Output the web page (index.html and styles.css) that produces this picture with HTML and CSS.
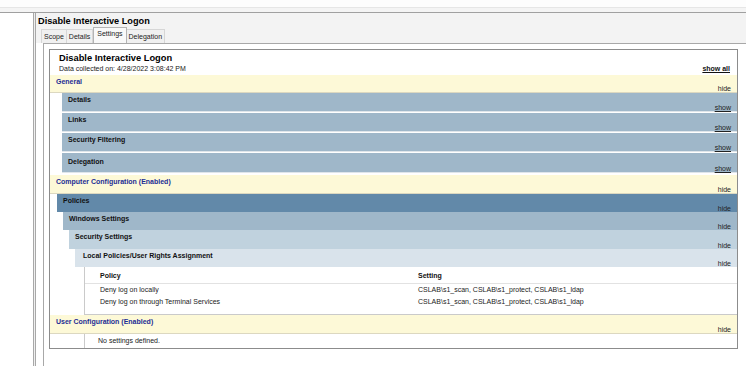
FILE: index.html
```html
<!DOCTYPE html>
<html lang="en">
<head>
  <meta charset="UTF-8">
  <title>Disable Interactive Logon</title>
  <link rel="stylesheet" href="styles.css">
</head>
<body>
  <div class="topbar"></div>
  <div class="main">
    <div class="tree"></div>
    <div class="splitter"></div>
    <div class="pane">
      <div class="pane-head">
        <h1>Disable Interactive Logon</h1>
        <div class="tabs">
          <span class="tab">Scope</span>
          <span class="tab">Details</span>
          <span class="tab active">Settings</span>
          <span class="tab">Delegation</span>
        </div>
      </div>

      <div class="page">
        <div class="report">
          <div class="report-head">
            <div class="report-title">Disable Interactive Logon</div>
            <div class="report-meta">
              <span>Data collected on: 4/28/2022 3:08:42 PM</span>
              <a class="show-all">show all</a>
            </div>
          </div>

          <div class="bar he0 first"><span class="name">General</span><a class="toggle">hide</a></div>
          <div class="block general">
            <div class="bar he1 gap"><span class="name">Details</span><a class="toggle show">show</a></div>
            <div class="bar he1 gap"><span class="name">Links</span><a class="toggle show">show</a></div>
            <div class="bar he1 gap"><span class="name">Security Filtering</span><a class="toggle show">show</a></div>
            <div class="bar he1 gap last"><span class="name">Delegation</span><a class="toggle show">show</a></div>
          </div>

          <div class="bar he0"><span class="name">Computer Configuration (Enabled)</span><a class="toggle">hide</a></div>
          <div class="block level0">
            <div class="bar he1h"><span class="name">Policies</span><a class="toggle">hide</a></div>
            <div class="block level1">
              <div class="bar he1"><span class="name">Windows Settings</span><a class="toggle">hide</a></div>
              <div class="block level1">
                <div class="bar he2"><span class="name">Security Settings</span><a class="toggle">hide</a></div>
                <div class="block level1">
                  <div class="bar he3"><span class="name">Local Policies/User Rights Assignment</span><a class="toggle">hide</a></div>
                  <div class="settings">
                    <table>
                      <tr><th>Policy</th><th>Setting</th></tr>
                      <tr><td>Deny log on locally</td><td>CSLAB\s1_scan, CSLAB\s1_protect, CSLAB\s1_ldap</td></tr>
                      <tr><td>Deny log on through Terminal Services</td><td>CSLAB\s1_scan, CSLAB\s1_protect, CSLAB\s1_ldap</td></tr>
                    </table>
                  </div>
                </div>
              </div>
            </div>
          </div>

          <div class="bar he0"><span class="name">User Configuration (Enabled)</span><a class="toggle">hide</a></div>
          <div class="none">No settings defined.</div>
        </div>
      </div>
    </div>
  </div>
</body>
</html>
```

FILE: styles.css
```css
* { box-sizing: border-box; }

body {
  margin: 0;
  width: 746px;
  height: 366px;
  overflow: hidden;
  background: #fff;
  font-family: "Liberation Sans", Arial, sans-serif;
  color: #000;
}

.topbar {
  height: 13px;
  background: linear-gradient(#fdfdfd 0 7px, #e6e6e6 7px 8px, #f4f4f4 8px);
  border-bottom: 1px solid #a0a0a0;
}

.main { display: flex; height: 353px; }
.tree { width: 33px; background: #fff; }

.splitter {
  width: 3px;
  border-left: 1px solid #a8a8a8;
  border-right: 1px solid #a8a8a8;
  background: #efefef;
}

.pane { flex: 1; display: flex; flex-direction: column; min-width: 0; }

.pane-head { height: 30px; background: #f3f3f3; padding-left: 2px; }

h1 {
  margin: 0;
  height: 14px;
  padding-top: 2px;
  font-size: 9.2px;
  line-height: 12px;
  font-weight: bold;
}

.tabs { display: flex; align-items: flex-end; height: 16px; padding-left: 3px; }

.tab {
  font-size: 7px;
  height: 14px;
  line-height: 11px;
  padding: 1px 2px 0;
  border: 1px solid #d6d6d6;
  border-bottom: none;
  border-left: none;
  color: #222;
  background: #f0f0f0;
}
.tab:first-child { border-left: 1px solid #d6d6d6; }
.tab.active {
  height: 16px;
  line-height: 11px;
  padding: 0 3px;
  background: #f9f9f9;
  border: 1px solid #b4b4b4;
  border-bottom: none;
}

.page {
  flex: 1;
  margin-left: 7px;
  border-top: 1px solid #a8a8a8;
  border-left: 1px solid #a8a8a8;
  background: #fff;
  padding: 5px 8px 0 5px;
}

.report { border: 1px solid #8c8c8c; }

.report-head { height: 25px; padding: 2px 7px 0 9px; }
.report-title { font-size: 9.3px; line-height: 12px; font-weight: bold; }
.report-meta {
  display: flex;
  justify-content: space-between;
  font-size: 7px;
  line-height: 9px;
  color: #222;
}
.show-all { font-weight: bold; text-decoration: underline; color: #111; }

/* section headers */
.bar {
  display: flex;
  justify-content: space-between;
  height: 18px;
  padding: 2px 6px 0 6px;
  font-size: 7px;
  color: #111;
}
.bar .name { font-weight: bold; line-height: 9px; align-self: flex-start; }
.bar .toggle { line-height: 7px; align-self: flex-end; color: #222; }
.bar .toggle.show { text-decoration: underline; }

.he0 {
  height: 19px;
  background: #fdf9d7;
  border-bottom: 1px solid #dcd8c0;
}
.he0 .name { color: #1c2d94; }
.he0.first { height: 18px; }

.he1 { background: #9fb7c9; }
.he1.gap { height: 19px; border-bottom: 1px solid #dfe5ea; margin-bottom: 1px; }
.he1.gap.last { height: 20px; padding-top: 4px; margin-bottom: 2px; }
.he1h { background: #6289a9; }
.he2 { background: #c0d2de; height: 19px; }
.he3 { background: #d9e3eb; }
.he3 .name { padding-left: 2px; }

.block.general { margin-left: 12px; }
.block.level0 { margin-left: 7px; }
.block.level1 { margin-left: 6px; }

.settings {
  margin-left: 9px;
  border-left: 1px solid #cacaca;
  border-bottom: 1px solid #cacaca;
  padding-bottom: 6px;
}

table { width: 100%; border-collapse: collapse; font-size: 7px; color: #222; }
th {
  text-align: left;
  font-weight: bold;
  color: #111;
  padding: 4px 0 3px;
  line-height: 9px;
  border-bottom: 1px solid #e2e2e2;
}
td { height: 12px; line-height: 12px; padding: 0; }
th:first-child, td:first-child { width: 333px; padding-left: 15px; }

.none {
  margin-left: 34px;
  border-left: 1px solid #cacaca;
  height: 14px;
  line-height: 14px;
  padding-left: 13px;
  font-size: 7px;
  color: #222;
}
```
